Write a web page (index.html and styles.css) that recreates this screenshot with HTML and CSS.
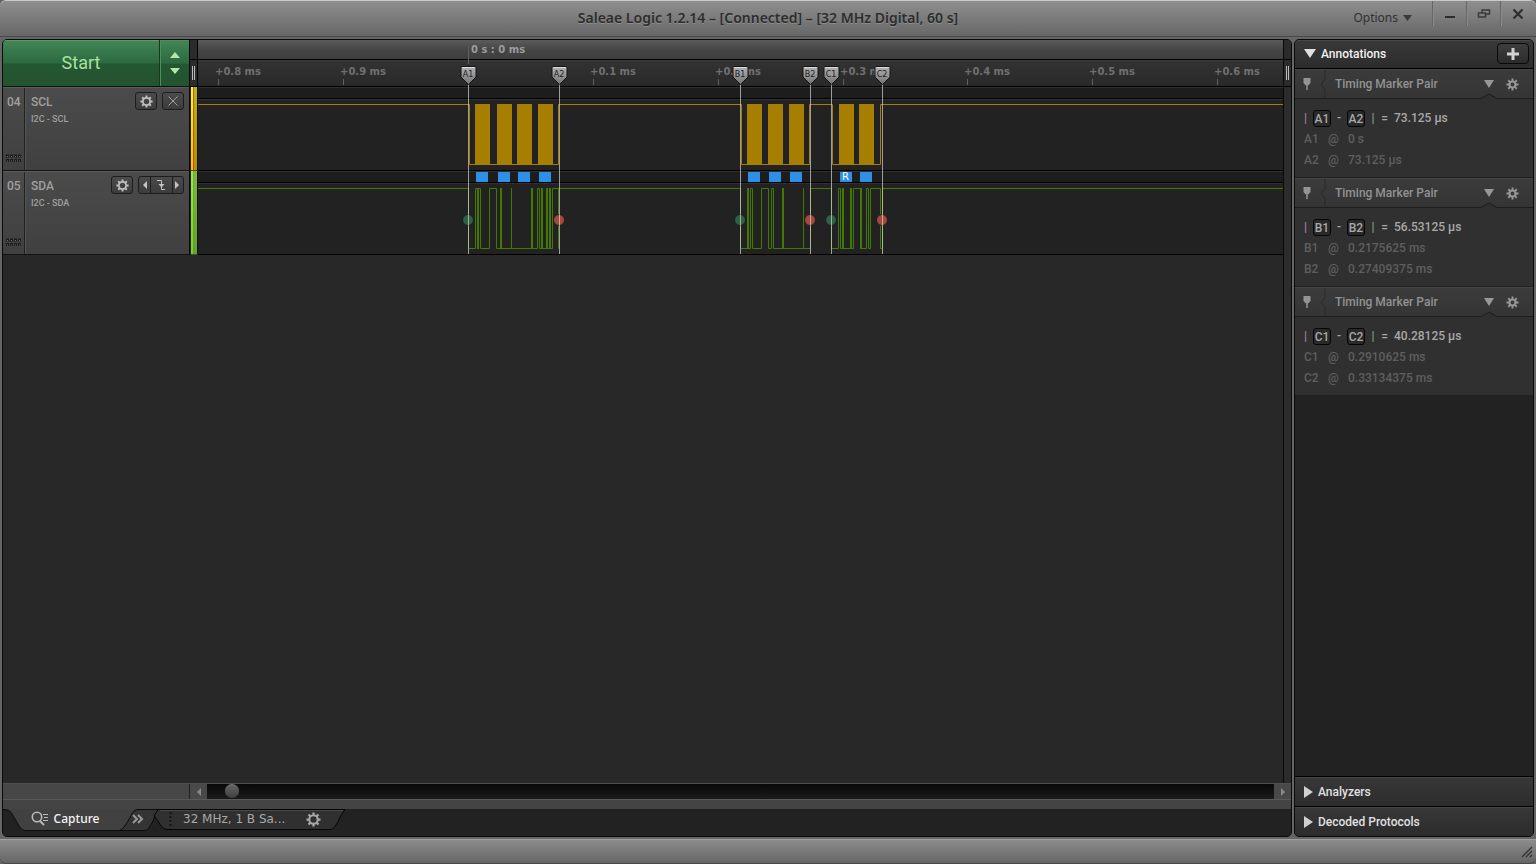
FILE: index.html
```html
<!DOCTYPE html>
<html lang="en">
<head>
<meta charset="utf-8">
<title>Saleae Logic 1.2.14</title>
<link rel="stylesheet" href="styles.css">
</head>
<body>
<svg class="defs" aria-hidden="true">
  <symbol id="gear" viewBox="0 0 16 16">
    <circle cx="8" cy="8" r="4.500" fill="none" stroke="currentColor" stroke-width="2.200"/>
    <path d="M8 .5v3M8 12.500v3M.5 8h3M12.500 8h3M2.700 2.700l2 2M11.300 11.300l2 2M13.300 2.700l-2 2M4.700 11.300l-2 2" stroke="currentColor" stroke-width="2.400"/>
  </symbol>
  <symbol id="cog" viewBox="0 0 14 14">
    <circle cx="7" cy="7" r="3.200" fill="none" stroke="currentColor" stroke-width="2.200"/>
    <path d="M7 .5v3M7 10.500v3M.5 7h3M10.500 7h3M2.400 2.400l2 2M9.600 9.600l2 2M11.600 2.400l-2 2M4.400 9.600l-2 2" stroke="currentColor" stroke-width="2"/>
  </symbol>
  <symbol id="pin" viewBox="0 0 10 14"><path d="M1.500 1h7v5L6.500 8.200H3.500L1.500 6z" fill="currentColor"/><path d="M5 8v5" stroke="currentColor" stroke-width="1.500"/></symbol>
  <symbol id="flag" viewBox="0 0 18 21">
    <path d="M2.500 1.500h13q1 0 1 1v9.500L9 19.500 1.500 12V2.500q0-1 1-1z" fill="url(#flagfill)" stroke="#151515"/>
    <path d="M3 2.500h12" stroke="#ddd"/>
  </symbol>
  <defs><linearGradient id="flagfill" x1="0" y1="0" x2="0" y2="1"><stop offset="0" stop-color="#b4b4b4"/><stop offset="1" stop-color="#737373"/></linearGradient></defs>
</svg>

<header class="titlebar">
  <h1 class="title">Saleae Logic 1.2.14 – [Connected] – [32 MHz Digital, 60 s]</h1>
  <button class="options" type="button">Options <svg width="9" height="6" viewBox="0 0 9 6"><path d="M0 0h9L4.500 6z" fill="#3a3a3a"/></svg></button>
  <div class="winbuttons">
    <button type="button" aria-label="Minimize"><svg width="14" height="14" viewBox="0 0 14 14"><path d="M2 10h10" stroke="#2e2e2e" stroke-width="2"/></svg></button>
    <button type="button" aria-label="Restore"><svg width="14" height="14" viewBox="0 0 14 14"><path d="M5 3h7.500v4H5z" fill="none" stroke="#3a3a3a" stroke-width="1.500"/><path d="M1.500 6h7v4h-7z" fill="#808080" stroke="#3a3a3a" stroke-width="1.500"/></svg></button>
    <button type="button" aria-label="Close"><svg width="14" height="14" viewBox="0 0 14 14"><path d="M2.500 2.500l9 9M11.500 2.500l-9 9" stroke="#2e2e2e" stroke-width="2.200"/></svg></button>
  </div>
</header>

<div class="main">
  <main class="workspace">
    <div class="stage">
      <section class="labels">
        <div class="startbar">
          <button class="start" type="button">Start</button>
          <button class="spin" type="button" aria-label="Capture settings"><svg width="10" height="24" viewBox="0 0 10 24"><path d="M0 7l5-6 5 6zM0 17l5 6 5-6z" fill="#b4e8ab"/></svg></button>
        </div>
        <div class="channel">
          <div class="chnum">04<svg class="grip" width="16" height="8"><path d="M1 2h15M1 6.500h15" stroke="#1c1c1c" stroke-width="3" stroke-dasharray="3 1"/><path d="M2 2.500h14M2 7h14" stroke="#707070" stroke-dasharray="1 3"/></svg></div>
          <div class="chbody">
            <div class="chname">SCL<small>I2C - SCL</small></div>
            <div class="chtools">
              <button class="tool" type="button" aria-label="SCL settings"><svg width="13" height="13"><use href="#gear"/></svg></button>
              <button class="tool" type="button" aria-label="Clear trigger"><svg width="12" height="12" viewBox="0 0 12 12"><path d="M1.500 1.500l9 9M10.500 1.500l-9 9" stroke="#a0a0a0"/></svg></button>
            </div>
          </div>
        </div>
        <div class="channel">
          <div class="chnum">05<svg class="grip" width="16" height="8"><path d="M1 2h15M1 6.500h15" stroke="#1c1c1c" stroke-width="3" stroke-dasharray="3 1"/><path d="M2 2.500h14M2 7h14" stroke="#707070" stroke-dasharray="1 3"/></svg></div>
          <div class="chbody">
            <div class="chname">SDA<small>I2C - SDA</small></div>
            <div class="chtools">
              <button class="tool" type="button" aria-label="SDA settings"><svg width="13" height="13"><use href="#gear"/></svg></button>
              <div class="triple">
                <button type="button" aria-label="Previous edge"><svg width="5" height="8" viewBox="0 0 5 8"><path d="M5 0v8L1 4z" fill="#c4c4c4"/></svg></button>
                <button class="edge" type="button" aria-label="Falling edge"><svg width="12" height="12" viewBox="0 0 12 12"><path d="M2 1.500h4.500v9H10" fill="none" stroke="#c4c4c4"/><path d="M3.500 5h6l-3 3.500z" fill="#c4c4c4"/></svg></button>
                <button type="button" aria-label="Next edge"><svg width="5" height="8" viewBox="0 0 5 8"><path d="M0 0v8l4-4z" fill="#c4c4c4"/></svg></button>
              </div>
            </div>
          </div>
        </div>
      </section>
      <div class="splitter left">
        <div class="split-top"></div><div class="split-grip"></div>
        <div class="strip yellow"></div><div class="strip green"></div>
      </div>
      <section class="plot">
        <div class="ruler-major"></div>
        <div class="ruler-minor"></div>
        <div class="track"></div>
        <div class="track"></div>
        <svg class="traces" aria-label="Waveforms">
          <g transform="translate(-198 -40)">
            <g class="ruler-text">
              <text class="origin" x="471" y="53">0 s : 0 ms</text>
              <text x="215" y="75">+0.8 ms</text><text x="340" y="75">+0.9 ms</text><text x="590" y="75">+0.1 ms</text>
              <text x="715" y="75">+0.2 ms</text><text x="840" y="75">+0.3 ms</text><text x="964" y="75">+0.4 ms</text>
              <text x="1089" y="75">+0.5 ms</text><text x="1214" y="75">+0.6 ms</text>
            </g>
            <path d="M218.500 79v6M343.500 79v6M593.500 79v6M718.500 79v6M843.500 79v6M967.500 79v6M1092.500 79v6M1217.500 79v6M468.500 46v18" stroke="#606060"/>
            <path class="scl" d="M0 104.500H469.500V164.500H558.500V104.500H741.500V164.500H809.500V104.500H832.500V164.500H880.500V104.500H5000"/>
            <path fill="#a67f00" d="M475 104h15v61h-15zM497 104h15v61h-15zM517 104h15v61h-15zM538 104h15v61h-15zM747 104h15v61h-15zM768 104h15v61h-15zM789 104h15v61h-15zM839 104h15v61h-15zM859 104h15v61h-15z"/>
            <path fill="#2d8fe6" d="M476 172h12v10h-12zM498 172h12v10h-12zM518 172h12v10h-12zM539 172h12v10h-12zM748 172h12v10h-12zM769 172h12v10h-12zM790 172h12v10h-12zM840 172h12v10h-12zM860 172h12v10h-12z"/>
            <text class="frame" x="842" y="180">R</text>
            <path class="sda" d="M0 188.500H468.500V248.500H475.500V188.500H480.500V248.500H489.500V188.500H496.500V248.500H537.500V188.500H539.500V248.500H552.500V188.500H558.500V248.500M558.500 188.500H740.500V248.500H750.500V188.500H752.500V248.500H761.500V188.500H768.500V248.500H771.500V188.500H773.500V248.500H810.500V188.500H831.500V248.500H838.500V188.500H840.500V248.500H853.500V188.500H860.500V248.500H866.500V188.500H868.500V248.500H870.500V188.500H880.500V248.500H882.500V188.500H5000M511.500 188V249M803.500 188V249"/>
            <path class="sda-thick" d="M478 188v61M501 188v61M532 188v61M542 188v61M547 188v61M550 188v61M748 188v61M783 188v61M843 188v61M851 188v61M861 188v61"/>
            <g stroke="#1c1c1c">
              <g fill="#2c6243"><circle cx="468" cy="220" r="5.500"/><circle cx="740" cy="220" r="5.500"/><circle cx="831" cy="220" r="5.500"/></g>
              <g fill="#a34b38"><circle cx="559" cy="220" r="5.500"/><circle cx="810" cy="220" r="5.500"/><circle cx="882" cy="220" r="5.500"/></g>
            </g>
            <path d="M468.500 84v170M559.500 84v170M740.500 84v170M810.500 84v170M831.500 84v170M882.500 84v170" stroke="#d8d8d8" stroke-opacity=".68"/>
            <g>
              <use href="#flag" x="459.500" y="65" width="18" height="21"/><use href="#flag" x="550.500" y="65" width="18" height="21"/><use href="#flag" x="731.500" y="65" width="18" height="21"/><use href="#flag" x="801.500" y="65" width="18" height="21"/><use href="#flag" x="822.500" y="65" width="18" height="21"/><use href="#flag" x="873.500" y="65" width="18" height="21"/>
            </g>
            <g class="flag-text"><text x="468" y="77">A1</text><text x="559" y="77">A2</text><text x="740" y="77">B1</text><text x="810" y="77">B2</text><text x="831" y="77">C1</text><text x="882" y="77">C2</text></g>
          </g>
        </svg>
      </section>
      <div class="splitter right"><div class="split-top"></div><div class="split-grip"></div></div>
    </div>

    <div class="scrollrow">
      <div class="scrollpad"></div>
      <button type="button" aria-label="Scroll left"><svg width="6" height="8" viewBox="0 0 6 8"><path d="M5 0v8L1 4z" fill="#8a8a8a"/></svg></button>
      <div class="scrolltrack"><div class="knob"></div></div>
      <button type="button" aria-label="Scroll right"><svg width="6" height="8" viewBox="0 0 6 8"><path d="M1 0v8l4-4z" fill="#8a8a8a"/></svg></button>
    </div>

    <nav class="tabs">
      <svg class="tabshape" width="360" height="37" viewBox="0 0 360 37">
        <path d="M0 0H360V9H0z" fill="#444"/>
        <path d="M0 9C8 10 8 12 12 19S18 30 22 30.500H118L135 9z" fill="#414141"/>
        <path d="M0 9.500C8 10 8 12 12 19S18 30 22 30.500H116" fill="none" stroke="#0c0c0c"/>
        <path d="M116 30.500C122 30 128 14 131 11Q133 9 137 9.500H155C152 16 147 30 142 30.500z" fill="#343434" stroke="#0c0c0c"/>
        <path d="M155 9.500H342C337 15 333 30 327 29.500H164C158 29 156 21 151 16z" fill="#303030" stroke="#050505"/>
        <path d="M157 10.500H340" stroke="#484848"/>
      </svg>
      <button class="tab active" type="button"><svg width="17" height="15" viewBox="0 0 17 15"><circle cx="6" cy="6" r="4.700" fill="none" stroke="#b8b8b8" stroke-width="1.600"/><path d="M9 10l4 4" stroke="#b8b8b8" stroke-width="2"/><path d="M12 3.500h5M13 6.500h4M12 9.500h5" stroke="#b8b8b8"/></svg>Capture</button>
      <button class="tab more" type="button" aria-label="More"><svg width="12" height="10" viewBox="0 0 12 10"><path d="M1 1l4 4-4 4M6 1l4 4-4 4" fill="none" stroke="#999" stroke-width="2"/></svg></button>
      <button class="tab config" type="button"><svg width="3" height="16"><path d="M1.500 1v14" stroke="#151515" stroke-width="2" stroke-dasharray="2 2"/></svg><span>32 MHz, 1 B Sa...</span><svg width="15" height="15"><use href="#gear"/></svg></button>
    </nav>
  </main>

  <aside class="sidebar">
    <div class="sidehead">
      <button class="fold" type="button"><svg width="12" height="9" viewBox="0 0 12 9"><path d="M0 0h12L6 9z" fill="#e0e0e0"/></svg>Annotations</button>
      <button class="add" type="button" aria-label="Add annotation"><svg width="12" height="12" viewBox="0 0 12 12"><path d="M6 0v12M0 6h12" stroke="#d2d2d2" stroke-width="3"/></svg></button>
    </div>
    <section class="pair">
      <header><svg class="pin" width="10" height="14"><use href="#pin"/></svg><svg class="notch" width="6" height="29" viewBox="0 0 6 29"><path d="M5 0v9L1 14.500 5 20v9" fill="none" stroke="#282828"/></svg><h2>Timing Marker Pair</h2><svg class="down" width="10" height="8" viewBox="0 0 10 8"><path d="M0 0h10L5 8z" fill="#989898"/></svg><svg class="cog" width="13" height="13"><use href="#cog"/></svg><svg class="peak" width="16" height="6" viewBox="0 0 16 6"><path d="M0 6V5.500L8 1l8 4.500V6z" fill="#303030"/><path d="M0 5.500L8 1l8 4.500" fill="none" stroke="#1d1d1d"/></svg></header>
      <p class="delta"><i class="p">|</i><b>A1</b><i>-</i><b>A2</b><i class="g">|</i><i>=</i><span>73.125 µs</span></p>
      <p class="at"><span>A1</span><span>@</span><span>0 s</span></p>
      <p class="at"><span>A2</span><span>@</span><span>73.125 µs</span></p>
    </section>
    <section class="pair">
      <header><svg class="pin" width="10" height="14"><use href="#pin"/></svg><svg class="notch" width="6" height="29" viewBox="0 0 6 29"><path d="M5 0v9L1 14.500 5 20v9" fill="none" stroke="#282828"/></svg><h2>Timing Marker Pair</h2><svg class="down" width="10" height="8" viewBox="0 0 10 8"><path d="M0 0h10L5 8z" fill="#989898"/></svg><svg class="cog" width="13" height="13"><use href="#cog"/></svg><svg class="peak" width="16" height="6" viewBox="0 0 16 6"><path d="M0 6V5.500L8 1l8 4.500V6z" fill="#303030"/><path d="M0 5.500L8 1l8 4.500" fill="none" stroke="#1d1d1d"/></svg></header>
      <p class="delta"><i class="p">|</i><b>B1</b><i>-</i><b>B2</b><i class="g">|</i><i>=</i><span>56.53125 µs</span></p>
      <p class="at"><span>B1</span><span>@</span><span>0.2175625 ms</span></p>
      <p class="at"><span>B2</span><span>@</span><span>0.27409375 ms</span></p>
    </section>
    <section class="pair">
      <header><svg class="pin" width="10" height="14"><use href="#pin"/></svg><svg class="notch" width="6" height="29" viewBox="0 0 6 29"><path d="M5 0v9L1 14.500 5 20v9" fill="none" stroke="#282828"/></svg><h2>Timing Marker Pair</h2><svg class="down" width="10" height="8" viewBox="0 0 10 8"><path d="M0 0h10L5 8z" fill="#989898"/></svg><svg class="cog" width="13" height="13"><use href="#cog"/></svg><svg class="peak" width="16" height="6" viewBox="0 0 16 6"><path d="M0 6V5.500L8 1l8 4.500V6z" fill="#303030"/><path d="M0 5.500L8 1l8 4.500" fill="none" stroke="#1d1d1d"/></svg></header>
      <p class="delta"><i class="p">|</i><b>C1</b><i>-</i><b>C2</b><i class="g">|</i><i>=</i><span>40.28125 µs</span></p>
      <p class="at"><span>C1</span><span>@</span><span>0.2910625 ms</span></p>
      <p class="at"><span>C2</span><span>@</span><span>0.33134375 ms</span></p>
    </section>
    <div class="sidefill"></div>
    <button class="foldbar" type="button"><svg width="9" height="12" viewBox="0 0 9 12"><path d="M0 0v12l9-6z" fill="#d0d0d0"/></svg>Analyzers</button>
    <button class="foldbar" type="button"><svg width="9" height="12" viewBox="0 0 9 12"><path d="M0 0v12l9-6z" fill="#d0d0d0"/></svg>Decoded Protocols</button>
  </aside>
</div>

<footer class="statusbar"><svg width="12" height="12" viewBox="0 0 12 12"><path d="M1 11L11 1M5 11l6-6M9 11l2-2" stroke="#333" stroke-width="1.300"/></svg></footer>
</body>
</html>
```
FILE: styles.css
```css
* { box-sizing: border-box; }
body {
  margin: 0;
  height: 100vh;
  display: flex;
  flex-direction: column;
  overflow: hidden;
  background: #666;
  font-family: Roboto, "Liberation Sans", sans-serif;
  font-size: 12px;
  color: #a0a0a0;
}
button {
  margin: 0;
  padding: 0;
  border: 0;
  background: none;
  color: inherit;
  font: inherit;
  display: flex;
  align-items: center;
  justify-content: center;
}
h1, h2, p { margin: 0; }
.defs { position: absolute; width: 0; height: 0; }

.titlebar {
  height: 37px;
  flex: none;
  position: relative;
  display: flex;
  justify-content: flex-end;
  padding-right: 2px;
  background: linear-gradient(#8f8f8f, #676767);
  border-top: 1px solid #c8c8c8;
  border-bottom: 1px solid #484848;
  border-radius: 6px 6px 0 0;
}
.title {
  position: absolute;
  inset: 0;
  text-align: center;
  font: 600 14px/34px "Noto Sans", sans-serif;
  color: #2d2d2d;
  text-shadow: 0 1px #8e8e8e;
}
.options {
  position: relative;
  gap: 5px;
  margin-right: 20px;
  height: 33px;
  font: 12px "Noto Sans", sans-serif;
  color: #303030;
}
.winbuttons { position: relative; display: flex; }
.winbuttons button {
  width: 34px;
  height: 25px;
  border-left: 1px solid #666;
  box-shadow: inset 1px 0 #8b8b8b;
}

.main {
  flex: 1;
  min-height: 0;
  display: flex;
  gap: 2px;
  padding: 2px;
}
.workspace {
  flex: 1;
  min-width: 0;
  display: flex;
  flex-direction: column;
  border: 1px solid #0a0a0a;
  border-radius: 5px;
  overflow: hidden;
  background: #282828;
}
.stage {
  flex: 1;
  min-height: 0;
  display: grid;
  grid-template-columns: 186px 9px 1fr 8px;
}
.startbar {
  display: flex;
  height: 47px;
  border-bottom: 1px solid #111;
}
.start {
  flex: 1;
  padding-bottom: 2px;
  background: linear-gradient(#438657, #2c6a40 50%, #235732 52%, #24532f);
  color: #abe09d;
  font-size: 18px;
  box-shadow: inset 0 1px #5b9a6c;
}
.spin {
  width: 30px;
  background: linear-gradient(#438657, #2c6a40 50%, #235732 52%, #24532f);
  border-left: 1px solid #16391f;
  box-shadow: inset 1px 1px #4d8f60;
}
.channel {
  height: 84px;
  display: flex;
  background: linear-gradient(#4b4b4b, #404040);
  border-top: 1px solid #5b5b5b;
  border-bottom: 1px solid #141414;
  font-weight: 500;
}
.chnum {
  width: 22px;
  padding: 7px 0 8px 4px;
  display: flex;
  flex-direction: column;
  justify-content: space-between;
  border-right: 1px solid #202020;
  line-height: 14px;
}
.grip { margin-left: -2px; }
.chbody {
  flex: 1;
  display: flex;
  justify-content: space-between;
  border-left: 1px solid #555;
  padding: 4px 5px 0 5px;
}
.chname { line-height: 20px; }
.chname small { display: block; font-size: 9px; line-height: 14px; }
.chtools { display: flex; gap: 5px; height: 18px; }
.tool, .triple {
  border: 1px solid #1d1d1d;
  border-radius: 3px;
  background: linear-gradient(#4b4b4b, #3c3c3c);
  color: #c0c0c0;
}
.tool { width: 22px; }
.triple { width: 46px; display: flex; }
.triple button { flex: 1; }
.triple .edge { flex: 2; border: 1px solid #1d1d1d; border-width: 0 1px; }

.splitter { background: #282828; border-left: 1px solid #080808; }
.splitter.left { align-self: start; }
.split-top { height: 20px; background: #2b2b2b; border-bottom: 1px solid #000; }
.split-grip {
  height: 27px;
  border-bottom: 1px solid #000;
  background: linear-gradient(90deg, transparent 2px, #bbb 2px 3px, transparent 3px 4px, #bbb 4px 5px, transparent 5px) 0 6px / 7px 14px no-repeat #2b2b2b;
}
.splitter.left .split-top, .splitter.left .split-grip { border-right: 1px solid #000; }
.strip { height: 84px; margin-left: 1px; border-right: 1px solid #111; border-bottom: 1px solid #465026; }
.yellow { background: linear-gradient(90deg, transparent 2px, #5008 2px 3px, #0004 3px), linear-gradient(#fff12a, #ffbd00); }
.green { background: linear-gradient(90deg, transparent 2px, #0505 2px 3px, #0003 3px), linear-gradient(#a3e34d, #7ccb35); }
.splitter.right { border-left: 1px solid #080808; background: #2c2c2c; }

.plot { position: relative; min-width: 0; }
.ruler-major { height: 20px; border-bottom: 1px solid #000; background: linear-gradient(#5b5b5b, #454545 52%, #3f3f3f); }
.ruler-minor { height: 27px; border-bottom: 1px solid #000; box-shadow: inset 0 1px #3c3c3c; background: linear-gradient(#333, #292929); }
.track {
  height: 84px;
  border-top: 1px solid #303030;
  border-bottom: 1px solid #000;
  background: linear-gradient(#1d1d1d 10px, #000 10px 11px, #303030 11px 12px, #222 12px);
}
.traces { position: absolute; left: 0; top: 0; width: 100%; height: 215px; overflow: hidden; }
.ruler-text { font: bold 10px "DejaVu Sans", sans-serif; fill: #707070; }
.ruler-text .origin { fill: #9c9c9c; }
.scl { fill: none; stroke: #a67f00; }
.sda { fill: none; stroke: #427900; }
.sda-thick { stroke: #427900; stroke-width: 2; }
.frame { font: 10px "DejaVu Sans", sans-serif; fill: #fff; }
.flag-text { font: 8px "DejaVu Sans", sans-serif; fill: #1c2028; text-anchor: middle; }

.scrollrow { display: flex; height: 16px; border-top: 1px solid #505050; }
.scrollpad { width: 187px; background: #474747; border-right: 1px solid #222; }
.scrollrow button { width: 17px; background: #494949; }
.scrolltrack { flex: 1; padding: 0 18px; background: linear-gradient(#080808, #1b1b1b); }
.knob { width: 14px; height: 14px; border-radius: 50%; background: linear-gradient(#636363, #3f3f3f); border-top: 1px solid #777; }

.tabs {
  position: relative;
  height: 37px;
  display: flex;
  padding-top: 9px;
  border-top: 1px solid #5a5a5a;
  background: linear-gradient(#444 9px, #222 9px);
}
.tabshape { position: absolute; left: 0; top: 0; }
.tab { position: relative; height: 20px; font: 12px "Noto Sans", sans-serif; color: #a8a8a8; }
.tab.active { width: 124px; gap: 6px; padding-bottom: 2px; font-weight: 500; color: #f4f4f4; }
.tab.more { width: 22px; }
.tab.config { gap: 11px; margin-left: 20px; font-family: "DejaVu Sans", sans-serif; font-size: 12px; }
.config span { width: 112px; text-align: left; }

.sidebar {
  width: 240px;
  flex: none;
  display: flex;
  flex-direction: column;
  border: 1px solid #0a0a0a;
  border-radius: 5px;
  overflow: hidden;
  background: #222;
  font-weight: 500;
}
.sidehead {
  height: 29px;
  display: flex;
  justify-content: space-between;
  align-items: center;
  padding: 0 4px 2px 9px;
  background: linear-gradient(#383838, #2c2c2c);
  border-top: 1px solid #474747;
  border-bottom: 1px solid #000;
  color: #f0f0f0;
}
.fold { gap: 5px; }
.add { width: 32px; height: 21px; border: 1px solid #090909; border-radius: 4px; background: linear-gradient(#3d3d3d, #2c2c2c); }
.pair {
  height: 109px;
  background: #303030;
  border-bottom: 1px solid #202020;
}
.pair header {
  position: relative;
  height: 30px;
  display: flex;
  align-items: center;
  padding: 0 14px 0 7px;
  background: linear-gradient(#3b3b3b, #353535);
  border-top: 1px solid #454545;
  border-bottom: 1px solid #1d1d1d;
}
.pin { color: #949494; }
.notch { margin-left: 8px; }
.pair h2 { flex: 1; margin-left: 9px; font-size: 12px; font-weight: 500; color: #929292; }
.down { margin-right: 12px; }
.cog { color: #989898; }
.peak { position: absolute; right: 36px; bottom: -1px; }
.delta, .at { display: flex; padding-left: 9px; height: 21px; line-height: 21px; }
.delta { margin-top: 9px; align-items: center; color: #a8a8a8; }
.delta i { font-style: normal; width: 16px; text-align: center; }
.delta .p { width: 3px; margin-right: 6px; color: #b57ca9; }
.delta .g { color: #84a184; }
.delta i + i { width: 7px; margin-right: 6px; }
.delta b {
  width: 18px;
  height: 17px;
  border: 1px solid #050505;
  border-radius: 3px;
  background: #292929;
  font-weight: 500;
  line-height: 16px;
  text-align: center;
}
.at { color: #5f5f5f; }
.at span:first-child { width: 24px; }
.at span:nth-child(2) { width: 20px; }
.sidefill { flex: 1; }
.foldbar {
  height: 30px;
  justify-content: flex-start;
  gap: 5px;
  padding-left: 9px;
  color: #e0e0e0;
  background: linear-gradient(#383838, #2c2c2c);
  border-top: 1px solid #000;
  box-shadow: inset 0 1px #454545;
}

.statusbar {
  height: 25px;
  flex: none;
  display: flex;
  align-items: flex-end;
  justify-content: flex-end;
  padding: 0 3px 5px;
  background: linear-gradient(#8c8c8c, #666);
  border-top: 1px solid #a0a0a0;
  border-bottom: 1px solid #484848;
  border-radius: 0 0 6px 6px;
}
```
